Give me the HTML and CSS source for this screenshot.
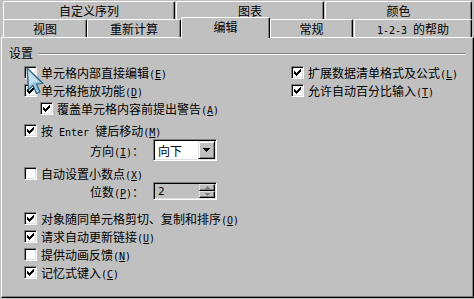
FILE: index.html
```html
<!DOCTYPE html>
<html lang="zh-CN">
<head>
    <meta charset="UTF-8">
    <title>选项 - 编辑</title>
    <link rel="stylesheet" href="styles.css">
</head>
<body>
    <div class="tabs tabs-back">
        <div class="tab w-custom">自定义序列</div>
        <div class="tab w-chart">图表</div>
        <div class="tab w-color">颜色</div>
    </div>
    <div class="tabs tabs-front">
        <div class="tab w-view">视图</div>
        <div class="tab w-calc">重新计算</div>
        <div class="tab tab-active w-edit">编辑</div>
        <div class="tab w-general">常规</div>
        <div class="tab w-help"><span><span class="en">1-2-3 </span>的帮助</span></div>
    </div>

    <div class="panel">
        <div class="group-title">
            <span>设置</span>
            <div class="rule"></div>
        </div>

        <div class="settings">
            <div class="col-left">
                <div class="row">
                    <span class="cb"></span>
                    <span>单元格内部直接编辑<span class="key">(<u>E</u>)</span></span>
                </div>
                <div class="row">
                    <span class="cb"><svg width="7" height="7" viewBox="0 0 7 7"><path d="M6 0h1v1h-1zM5 1h2v1h-2zM0 2h1v1h-1zM4 2h3v1h-3zM0 3h2v1h-2zM3 3h3v1h-3zM0 4h5v1h-5zM1 5h3v1h-3zM2 6h1v1h-1z"/></svg></span>
                    <span>单元格拖放功能<span class="key">(<u>D</u>)</span></span>
                </div>
                <div class="row sub">
                    <span class="cb"><svg width="7" height="7" viewBox="0 0 7 7"><path d="M6 0h1v1h-1zM5 1h2v1h-2zM0 2h1v1h-1zM4 2h3v1h-3zM0 3h2v1h-2zM3 3h3v1h-3zM0 4h5v1h-5zM1 5h3v1h-3zM2 6h1v1h-1z"/></svg></span>
                    <span>覆盖单元格内容前提出警告<span class="key">(<u>A</u>)</span></span>
                </div>
                <div class="row gap-s">
                    <span class="cb"><svg width="7" height="7" viewBox="0 0 7 7"><path d="M6 0h1v1h-1zM5 1h2v1h-2zM0 2h1v1h-1zM4 2h3v1h-3zM0 3h2v1h-2zM3 3h3v1h-3zM0 4h5v1h-5zM1 5h3v1h-3zM2 6h1v1h-1z"/></svg></span>
                    <span>按<span class="en"> Enter </span>键后移动<span class="key">(<u>M</u>)</span></span>
                </div>
                <div class="row field-row combo-row">
                    <span class="field-label">方向<span class="key">(<u>I</u>)</span>：</span>
                    <div class="combo">
                        <span class="combo-text">向下</span>
                        <span class="combo-btn"><svg width="7" height="4" viewBox="0 0 7 4"><path d="M0 0h7v1h-7zM1 1h5v1h-5zM2 2h3v1h-3zM3 3h1v1h-1z"/></svg></span>
                    </div>
                </div>
                <div class="row gap-xs">
                    <span class="cb"></span>
                    <span>自动设置小数点<span class="key">(<u>X</u>)</span></span>
                </div>
                <div class="row field-row">
                    <span class="field-label">位数<span class="key">(<u>P</u>)</span>：</span>
                    <div class="spin">
                        <span class="spin-text">2</span>
                        <span class="spin-btns">
                            <span class="spin-btn"><svg width="5" height="3" viewBox="0 0 5 3"><path d="M2 0h1v1h-1zM1 1h3v1h-3zM0 2h5v1h-5z"/></svg></span>
                            <span class="spin-btn"><svg width="5" height="3" viewBox="0 0 5 3"><path d="M0 0h5v1h-5zM1 1h3v1h-3zM2 2h1v1h-1z"/></svg></span>
                        </span>
                    </div>
                </div>
                <div class="row gap-l">
                    <span class="cb"><svg width="7" height="7" viewBox="0 0 7 7"><path d="M6 0h1v1h-1zM5 1h2v1h-2zM0 2h1v1h-1zM4 2h3v1h-3zM0 3h2v1h-2zM3 3h3v1h-3zM0 4h5v1h-5zM1 5h3v1h-3zM2 6h1v1h-1z"/></svg></span>
                    <span>对象随同单元格剪切、复制和排序<span class="key">(<u>O</u>)</span></span>
                </div>
                <div class="row">
                    <span class="cb"><svg width="7" height="7" viewBox="0 0 7 7"><path d="M6 0h1v1h-1zM5 1h2v1h-2zM0 2h1v1h-1zM4 2h3v1h-3zM0 3h2v1h-2zM3 3h3v1h-3zM0 4h5v1h-5zM1 5h3v1h-3zM2 6h1v1h-1z"/></svg></span>
                    <span>请求自动更新链接<span class="key">(<u>U</u>)</span></span>
                </div>
                <div class="row">
                    <span class="cb"></span>
                    <span>提供动画反馈<span class="key">(<u>N</u>)</span></span>
                </div>
                <div class="row">
                    <span class="cb"><svg width="7" height="7" viewBox="0 0 7 7"><path d="M6 0h1v1h-1zM5 1h2v1h-2zM0 2h1v1h-1zM4 2h3v1h-3zM0 3h2v1h-2zM3 3h3v1h-3zM0 4h5v1h-5zM1 5h3v1h-3zM2 6h1v1h-1z"/></svg></span>
                    <span>记忆式键入<span class="key">(<u>C</u>)</span></span>
                </div>
            </div>

            <div class="col-right">
                <div class="row">
                    <span class="cb"><svg width="7" height="7" viewBox="0 0 7 7"><path d="M6 0h1v1h-1zM5 1h2v1h-2zM0 2h1v1h-1zM4 2h3v1h-3zM0 3h2v1h-2zM3 3h3v1h-3zM0 4h5v1h-5zM1 5h3v1h-3zM2 6h1v1h-1z"/></svg></span>
                    <span>扩展数据清单格式及公式<span class="key">(<u>L</u>)</span></span>
                </div>
                <div class="row">
                    <span class="cb"><svg width="7" height="7" viewBox="0 0 7 7"><path d="M6 0h1v1h-1zM5 1h2v1h-2zM0 2h1v1h-1zM4 2h3v1h-3zM0 3h2v1h-2zM3 3h3v1h-3zM0 4h5v1h-5zM1 5h3v1h-3zM2 6h1v1h-1z"/></svg></span>
                    <span>允许自动百分比输入<span class="key">(<u>T</u>)</span></span>
                </div>
            </div>
        </div>
    </div>

    <!-- mouse pointer hovering the first checkbox -->
    <svg class="cursor" width="20" height="28" viewBox="0 0 20 28">
        <path d="M1 1 L2.5 23 L7 18.5 L10.5 26.5 L14 25 L10.5 17 L17 16.5 Z" fill="#9ac6dc" stroke="#2f6280" stroke-width="1.2" stroke-linejoin="round"/>
        <path d="M2.5 3.5 L3.5 19 L7.5 15 L13 15 Z" fill="#d6ecf6" opacity="0.7"/>
    </svg>
</body>
</html>
```

FILE: styles.css
```css
/* Reset */
* {
    margin: 0;
    padding: 0;
    box-sizing: border-box;
}

body {
    width: 474px;
    height: 299px;
    overflow: hidden;
    position: relative;
    background-color: #c0c0c0; /* Win98 face */
    color: #000;
    font-family: "Noto Sans CJK SC", sans-serif;
    font-size: 12px;
}

.en,
.key {
    font-family: "DejaVu Sans Mono", monospace;
    font-size: 10px;
    white-space: pre;
}

/* Tabs */
.tabs {
    display: flex;
    align-items: flex-start;
    height: 18px;
    padding-left: 3px;
}

.tabs-back {
    margin-top: 1px;
    gap: 1px;
}

.tab {
    height: 18px;
    display: flex;
    justify-content: center;
    line-height: 17px;
    white-space: nowrap;
    background-color: #c0c0c0;
    border-top: 1px solid #fff;
    border-left: 1px solid #fff;
    border-right: 1px solid #000;
    border-radius: 2px 2px 0 0;
    box-shadow: inset -1px 0 #808080;
}

.tab-active {
    position: relative;
    z-index: 1;
    height: 21px;
    margin-top: -2px;
    line-height: 18px;
}

.w-custom { width: 172px; }
.w-chart { width: 148px; }
.w-color { width: 147px; }
.w-view { width: 84px; }
.w-calc { width: 94px; }
.w-edit { width: 89px; }
.w-general { width: 83px; }
.w-help { width: 118px; margin-left: 1px; }

/* Panel */
.panel {
    margin-left: 1px;
    width: 473px;
    height: 261px;
    border: 1px solid;
    border-color: #fff #000 #000 #fff;
    box-shadow: inset -1px -1px #808080;
    padding: 7px 8px 0 7px;
}

.group-title {
    display: flex;
    align-items: center;
    height: 15px;
    gap: 5px;
}

.rule {
    flex: 1;
    height: 2px;
    margin-top: 3px;
    border-top: 1px solid #808080;
    border-bottom: 1px solid #fff;
}

.settings {
    display: flex;
    margin-top: 3px;
    padding-left: 15px;
}

.col-left {
    width: 267px;
}

.col-right {
    flex: 1;
}

.row {
    display: flex;
    align-items: center;
    height: 18px;
    white-space: nowrap;
}

.sub { padding-left: 16px; }
.gap-s { margin-top: 4px; }
.gap-xs { margin-top: 3px; }
.gap-l { margin-top: 9px; }

/* Checkbox */
.cb {
    flex: none;
    width: 13px;
    height: 13px;
    margin-right: 4px;
    display: flex;
    align-items: center;
    justify-content: center;
    background-color: #fff;
    border: 1px solid;
    border-color: #808080 #fff #fff #808080;
    box-shadow: inset 1px 1px #000, inset -1px -1px #dfdfdf;
}

.cb svg,
.combo-btn svg {
    display: block;
    fill: #000;
}

/* Direction / places */
.combo-row {
    height: 22px;
}

.field-label {
    width: 129px;
    padding-left: 66px;
}

.combo,
.spin {
    width: 64px;
    display: flex;
    align-items: center;
    padding: 1px;
    border: 1px solid;
    border-color: #808080 #fff #fff #808080;
    box-shadow: inset 1px 1px #000, inset -1px -1px #dfdfdf;
}

.combo {
    height: 22px;
    background-color: #fff;
}

.combo-text,
.spin-text {
    flex: 1;
    padding-left: 3px;
}

.combo-btn {
    width: 17px;
    height: 18px;
    display: flex;
    align-items: center;
    justify-content: center;
    background-color: #c0c0c0;
    border: 1px solid;
    border-color: #dfdfdf #000 #000 #dfdfdf;
    box-shadow: inset 1px 1px #fff, inset -1px -1px #808080;
}

.spin {
    height: 18px;
    background-color: #c0c0c0; /* disabled field */
}

.spin-text {
    font-family: "DejaVu Sans Mono", monospace;
    font-size: 11px;
}

.spin-btns {
    display: flex;
    flex-direction: column;
    width: 16px;
    height: 14px;
}

.spin-btn {
    height: 7px;
    display: flex;
    align-items: center;
    justify-content: center;
    border: 1px solid;
    border-color: #dfdfdf #000 #000 #dfdfdf;
    box-shadow: inset -1px -1px #808080;
}

.spin-btn svg {
    display: block;
    fill: #808080;
}

.cursor {
    position: absolute;
    left: 26px;
    top: 67px;
}
```
